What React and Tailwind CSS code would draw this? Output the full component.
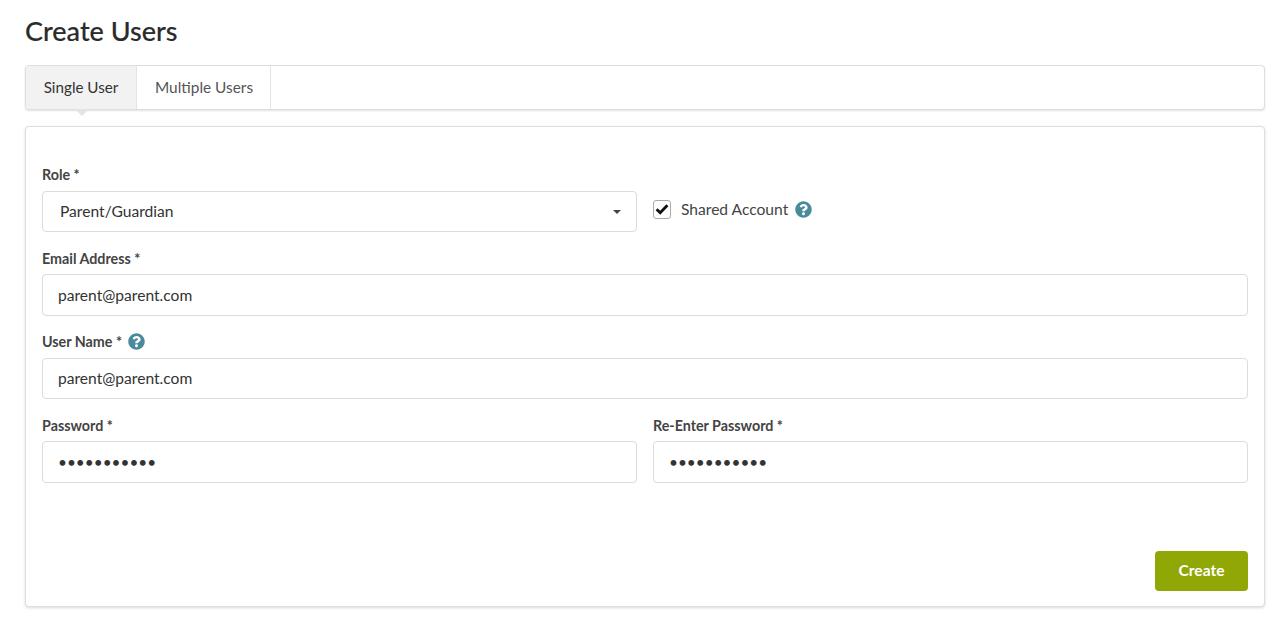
import React from "react";
import { FaQuestionCircle } from "react-icons/fa";

function Help() {
  return <FaQuestionCircle size={17} className="block shrink-0 text-[#4a8b9b]" />;
}

function Label({ children, help, className = "" }) {
  return (
    <div className={`flex items-center h-[17px] text-[14.3px] font-bold text-[#444] leading-[17px] ${className}`}>
      <span>{children}</span>
      {help && <span className="ml-[6px]"><Help /></span>}
    </div>
  );
}

function Field({ label, help, value, type = "text", h = "h-[42px]", className = "", labelGap = "mb-[7px]", dots }) {
  return (
    <div className={className}>
      <Label help={help} className={labelGap}>{label}</Label>
      <input
        readOnly
        type={type}
        value={value}
        className={`block w-full ${h} border border-[#dcdcdc] rounded-[4px] bg-white px-[15px] text-[#333] outline-none ${dots ? "text-[15.4px]" : "text-[15.6px]"}`}
      />
    </div>
  );
}

export default function App() {
  return (
    <div className="min-h-[631px] bg-white pl-[25px] pr-[23px] pt-[14px] font-['Lato','Noto_Sans',sans-serif] text-[#333]">
      <h1 className="h-[34px] text-[27px] leading-[34px] font-medium text-[#2b2b2b] [-webkit-text-stroke:0.15px_#2b2b2b] mb-[17px]">Create Users</h1>

      <div className="relative flex h-[45px] border border-[#dedede] rounded-[4px] bg-white shadow-[0_1px_2px_rgba(0,0,0,0.12)]">
        <div className="relative flex items-center justify-center w-[111px] bg-[#f2f2f2] border-r border-[#e3e3e3] rounded-l-[4px] text-[15.2px] text-[#333]">
          Single User
          <span className="absolute left-1/2 -ml-[6px] -bottom-[7px] w-0 h-0 border-l-[7px] border-r-[7px] border-t-[7px] border-l-transparent border-r-transparent border-t-[#e3e3e3]" />
        </div>
        <div className="flex items-center justify-center w-[134px] pl-[1px] border-r border-[#e3e3e3] text-[15.4px] text-[#555]">
          Multiple Users
        </div>
      </div>

      <div className="mt-[16px] h-[481px] flex flex-col border border-[#dedede] rounded-[4px] bg-white shadow-[0_1px_3px_rgba(0,0,0,0.15)] pt-[39px] px-[16px]">
        <div className="grid grid-cols-2 gap-x-[16px]">
          <div>
            <Label className="mb-[8px]">Role *</Label>
            <div className="relative flex items-center h-[41px] border border-[#dcdcdc] rounded-[4px] px-[17px] text-[15.6px] text-[#333]">
              Parent/Guardian
              <span className="absolute right-[15px] top-[18px] w-0 h-0 border-l-[4px] border-r-[4px] border-t-[4px] border-l-transparent border-r-transparent border-t-[#444]" />
            </div>
          </div>
          <div className="flex items-center pt-[20px]">
            <span className="flex items-center justify-center w-[18px] h-[19px] border border-[#aaa] rounded-[3px] bg-white">
              <svg width="14" height="12" viewBox="0 0 14 12">
                <path d="M1.6 6.2l3.6 3.6 7.2-7.6" fill="none" stroke="#111" strokeWidth="2.8" />
              </svg>
            </span>
            <span className="ml-[10px] pt-[1px] text-[15.6px] text-[#444]">Shared Account</span>
            <span className="ml-[7px]"><Help /></span>
          </div>
        </div>

        <Field className="mt-[18px]" label="Email Address *" value="parent@parent.com" />
        <Field className="mt-[17px]" label="User Name *" help value="parent@parent.com" h="h-[41px] pb-[2px]" labelGap="mb-[8px]" />

        <div className="grid grid-cols-2 gap-x-[16px] mt-[18px]">
          <Field label="Password *" type="password" value="abcdefghijk" dots />
          <Field label="Re-Enter Password *" type="password" value="abcdefghijk" dots />
        </div>

        <div className="flex justify-end mt-[68px]">
          <button className="w-[93px] h-[40px] rounded-[4px] bg-[#91a706] text-white text-[15.6px] font-bold">Create</button>
        </div>
      </div>
    </div>
  );
}
